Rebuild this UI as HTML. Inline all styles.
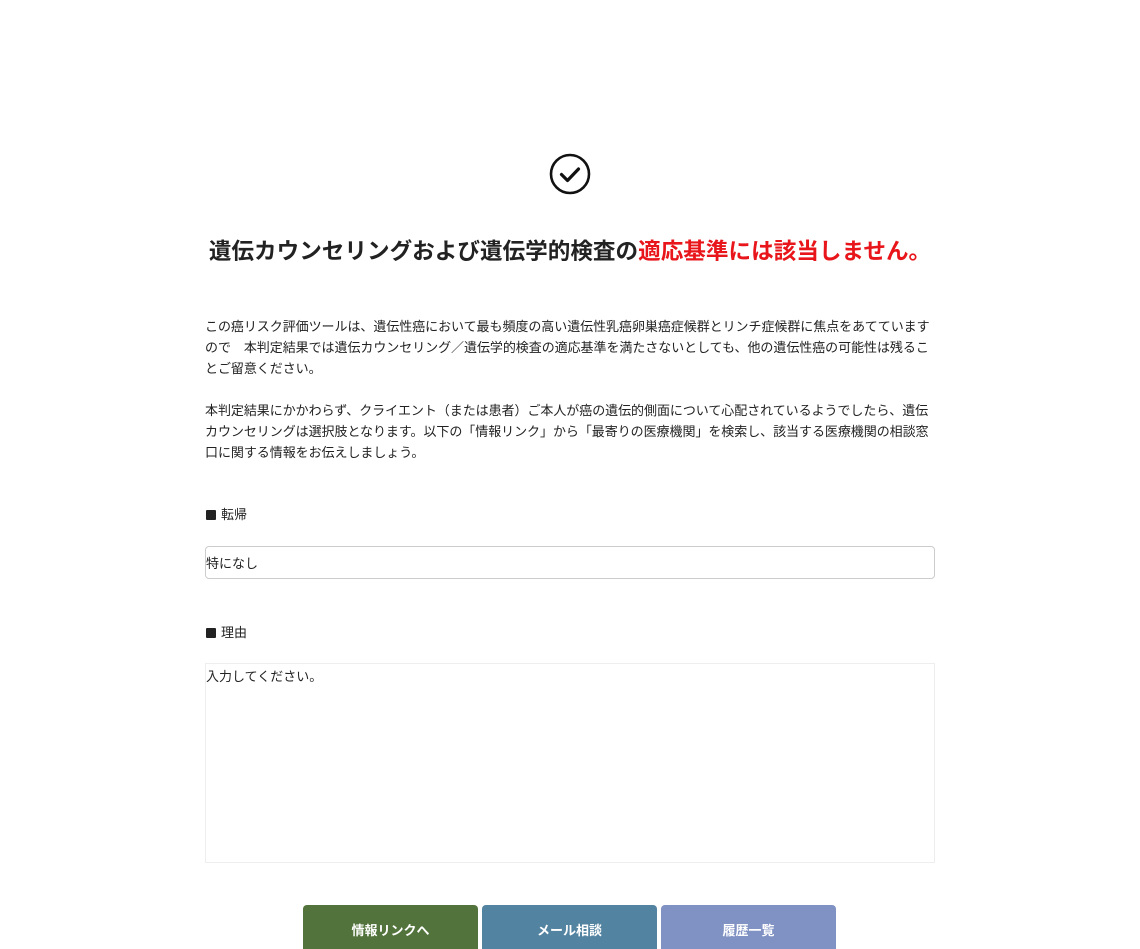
<!DOCTYPE html>
<html><head><meta charset="utf-8"><style>
body{margin:0;background:#fff;font-family:"Liberation Sans","Noto Sans CJK JP",sans-serif;color:#222;}
.wrap{position:relative;width:1140px;height:949px;overflow:hidden;}
h1{position:absolute;top:237px;left:0;width:1140px;text-align:center;font-size:22.6px;font-weight:bold;margin:0;line-height:30px;color:#222;}
h1 span{color:#e8161b;}
.p{position:absolute;left:205px;width:730px;font-size:13px;line-height:21px;margin:0;letter-spacing:-0.05px;}
.lab{position:absolute;left:206px;font-size:13px;line-height:18px;}
.lab i{display:inline-block;width:10px;height:10px;background:#222;margin-right:5px;vertical-align:-1px;border-radius:1px}
.inp{position:absolute;left:205px;width:728px;border:1px solid #ccc;border-radius:4px;font-size:13px;box-sizing:content-box;}
.ta{position:absolute;left:205px;width:728px;border:1px solid #eee;font-size:13px;}
.btn{position:absolute;top:905px;width:175px;height:60px;border-radius:4px;color:#fff;font-size:13px;font-weight:bold;text-align:center;line-height:52px;}
</style></head><body><div class="wrap">
<svg style="position:absolute;left:549px;top:153px" width="42" height="42" viewBox="0 0 42 42"><circle cx="21" cy="21" r="19" fill="none" stroke="#111" stroke-width="2.6"/><path d="M12.5 21.5l6 6 11-11.5" fill="none" stroke="#111" stroke-width="3.2" stroke-linecap="round" stroke-linejoin="round"/></svg>
<h1>遺伝カウンセリングおよび遺伝学的検査の<span>適応基準には該当しません。</span></h1>
<p class="p" style="top:316px">この癌リスク評価ツールは、遺伝性癌において最も頻度の高い遺伝性乳癌卵巣癌症候群とリンチ症候群に焦点をあてていますので　本判定結果では遺伝カウンセリング／遺伝学的検査の適応基準を満たさないとしても、他の遺伝性癌の可能性は残ることご留意ください。</p>
<p class="p" style="top:400px">本判定結果にかかわらず、クライエント（または患者）ご本人が癌の遺伝的側面について心配されているようでしたら、遺伝カウンセリングは選択肢となります。以下の「情報リンク」から「最寄りの医療機関」を検索し、該当する医療機関の相談窓口に関する情報をお伝えしましょう。</p>
<div class="lab" style="top:506px"><i></i>転帰</div>
<div class="inp" style="top:546px;height:31px;line-height:34px">特になし</div>
<div class="lab" style="top:624px"><i></i>理由</div>
<div class="ta" style="top:663px;height:198px;line-height:25px">入力してください。</div>
<div class="btn" style="left:303px;background:#52733b">情報リンクへ</div>
<div class="btn" style="left:482px;background:#5283a0">メール相談</div>
<div class="btn" style="left:661px;background:#8091c3">履歴一覧</div>
</div></body></html>
